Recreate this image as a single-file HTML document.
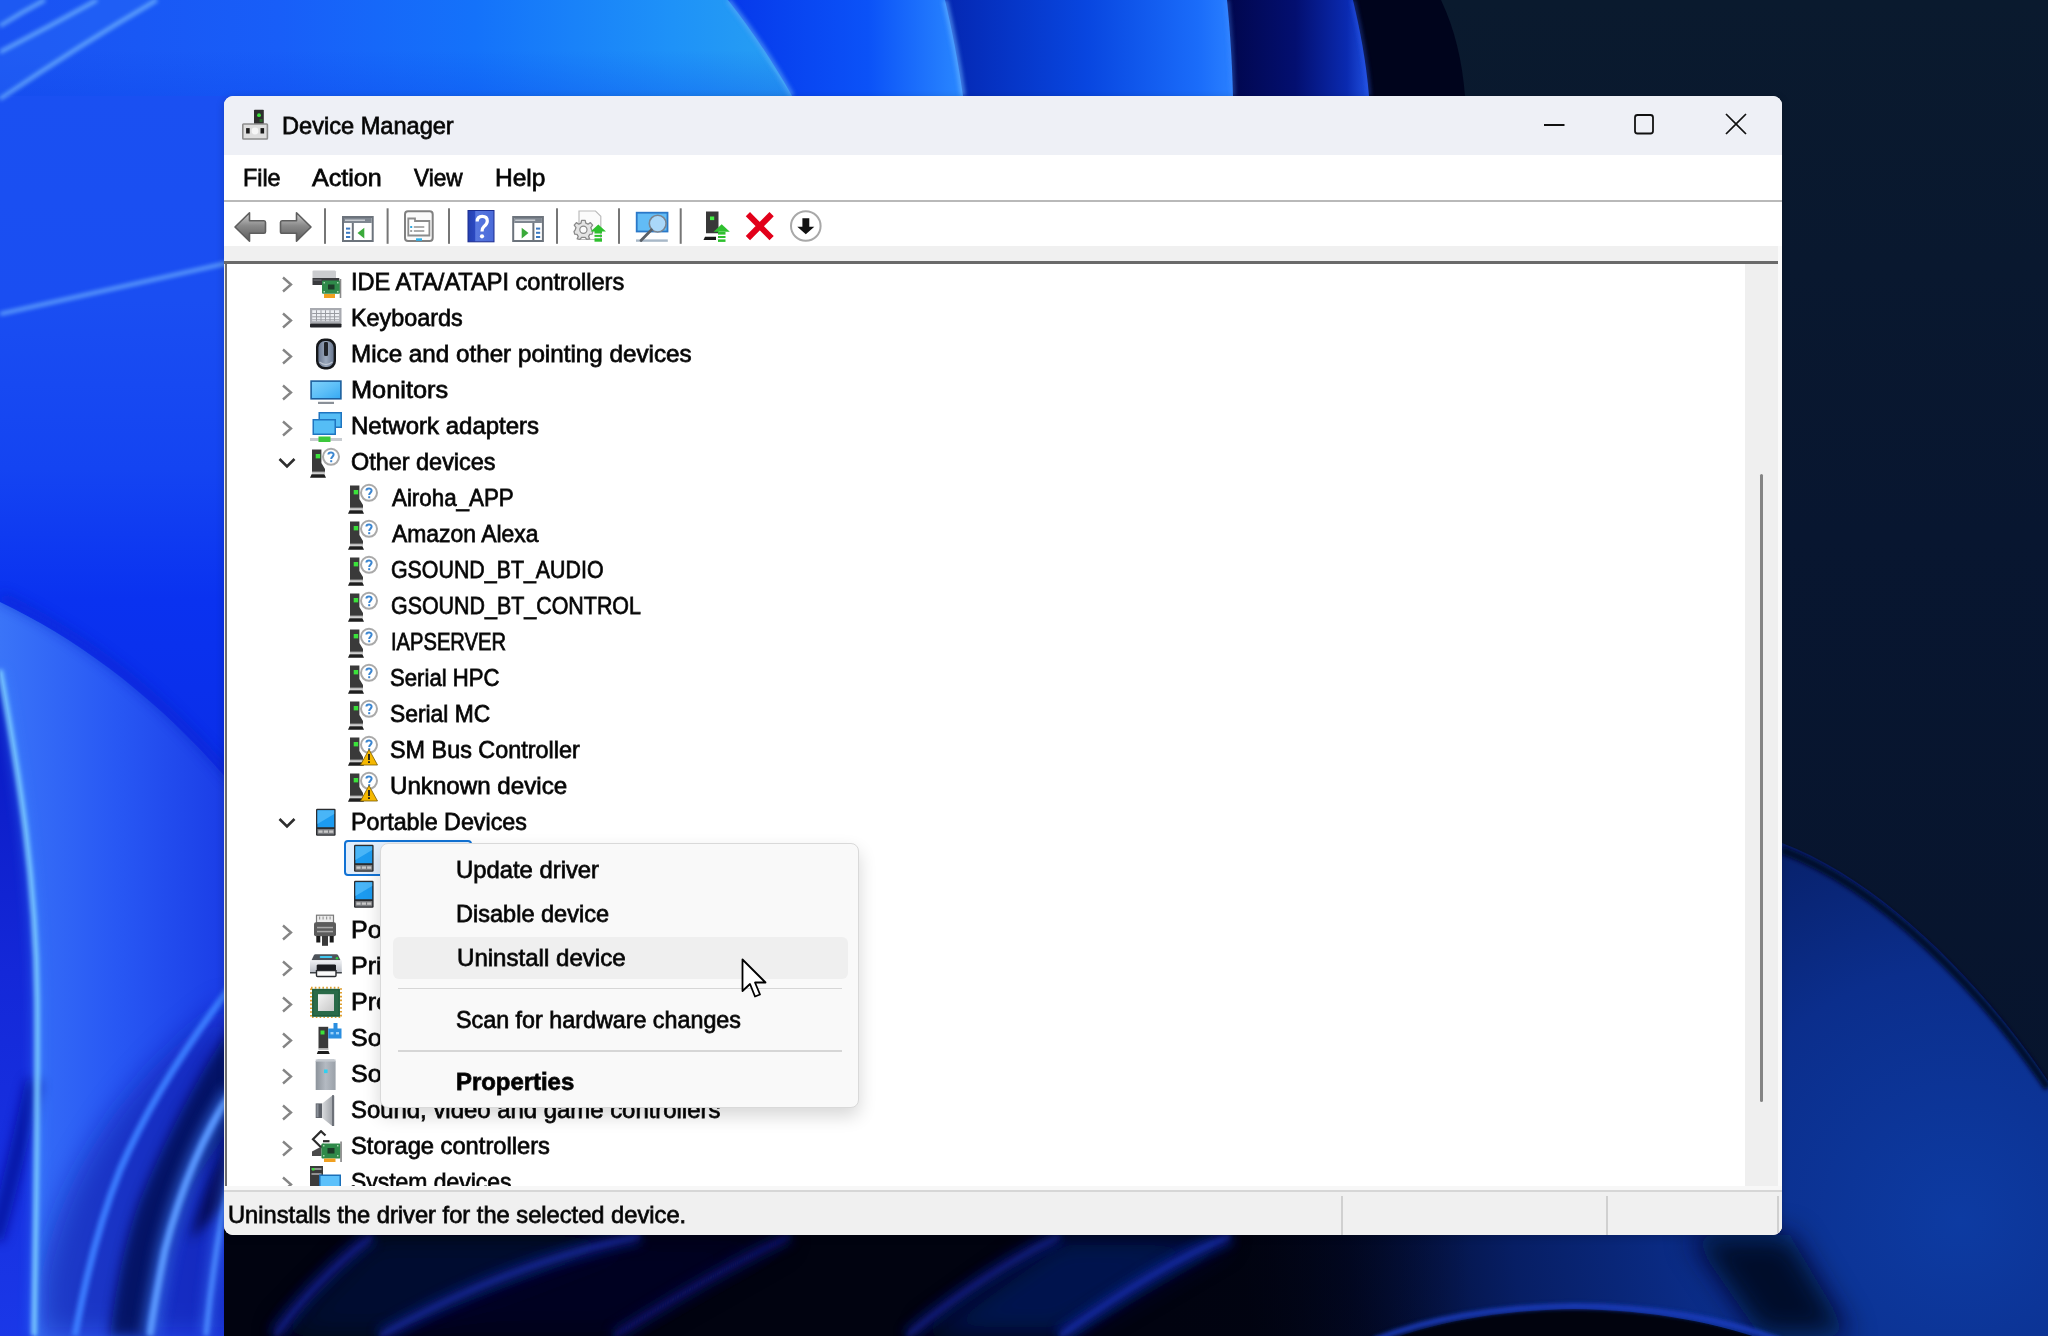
<!DOCTYPE html><html><head><meta charset="utf-8"><title>Device Manager</title><style>

html,body{margin:0;padding:0;width:2048px;height:1336px;overflow:hidden;background:#0a1628}
#bg{position:absolute;left:0;top:0}
.t{position:absolute;white-space:pre;line-height:40px;height:40px;font-family:"Liberation Sans",sans-serif;transform-origin:0 0;color:#000;-webkit-text-stroke:0.8px #141414}
.ic{position:absolute;overflow:visible}
.win{position:absolute;left:224px;top:96px;width:1558px;height:1139px;border-radius:9px;overflow:hidden;background:#f0f0f0;box-shadow:0 2px 8px rgba(0,0,0,.2)}
.abs{position:absolute}
.sel{position:absolute;border:2.4px solid #1172d4;border-radius:4px;background:#e3eefb;box-sizing:border-box}
.menu{position:absolute;left:380px;top:842.5px;width:479px;height:265px;background:#f9f9f9;border:1px solid #d9d9d9;border-radius:8px;box-sizing:border-box;box-shadow:0 8px 18px rgba(0,0,0,.16)}

</style></head><body>

<svg id="bg" width="2048" height="1336" viewBox="0 0 2048 1336">
<defs>
 <linearGradient id="bgA" gradientUnits="userSpaceOnUse" x1="0" y1="0" x2="792" y2="0"><stop offset="0" stop-color="#1a52f2"/><stop offset=".35" stop-color="#185ef8"/><stop offset=".6" stop-color="#1472fa"/><stop offset=".85" stop-color="#1e92f8"/><stop offset="1" stop-color="#28a0f2"/></linearGradient>
 <linearGradient id="bgB" x1="0" y1="0" x2="1" y2="0"><stop offset="0" stop-color="#0638ea"/><stop offset=".6" stop-color="#0b52f8"/><stop offset="1" stop-color="#2a88ff"/></linearGradient>
 <linearGradient id="bgC" x1="0" y1="0" x2="1" y2="0"><stop offset="0" stop-color="#0426b0"/><stop offset=".5" stop-color="#0846e0"/><stop offset=".88" stop-color="#1a6cfa"/><stop offset="1" stop-color="#2a80ff"/></linearGradient>
 <linearGradient id="bgD" x1="0" y1="0" x2="1" y2="0"><stop offset="0" stop-color="#01064a"/><stop offset=".5" stop-color="#030f70"/><stop offset=".85" stop-color="#0a2ab0"/><stop offset="1" stop-color="#2050e0"/></linearGradient>
 <linearGradient id="bgL" x1="0" y1="0" x2="0" y2="1"><stop offset="0" stop-color="#1a50f2"/><stop offset=".165" stop-color="#1a4ef2"/><stop offset=".3" stop-color="#1444f2"/><stop offset=".406" stop-color="#0a32f0"/><stop offset=".55" stop-color="#0a2ee8"/></linearGradient>
 <radialGradient id="bgR" gradientUnits="userSpaceOnUse" cx="1960" cy="1220" r="720"><stop offset="0" stop-color="#0d3ba2"/><stop offset=".35" stop-color="#0b2e8c"/><stop offset=".62" stop-color="#071e64"/><stop offset=".85" stop-color="#020a2a"/><stop offset="1" stop-color="#010412"/></radialGradient>
 <linearGradient id="bgP" x1="0" y1="0" x2="1" y2="0"><stop offset="0" stop-color="#3a74f8"/><stop offset=".5" stop-color="#2858f4"/><stop offset="1" stop-color="#1a3ce6"/></linearGradient>
 <linearGradient id="bgPL" x1="0" y1="0" x2="0" y2="1"><stop offset="0" stop-color="#0818c0"/><stop offset=".45" stop-color="#1428d8"/><stop offset="1" stop-color="#1a38e8"/></linearGradient>
 <linearGradient id="bgBot" gradientUnits="userSpaceOnUse" x1="224" y1="0" x2="1782" y2="0"><stop offset="0" stop-color="#010310"/><stop offset=".6" stop-color="#010310"/><stop offset=".8" stop-color="#010310" stop-opacity="0"/><stop offset="1" stop-color="#010310" stop-opacity="0"/></linearGradient>
 <linearGradient id="bgRS" x1="0" y1="0" x2="0" y2="1"><stop offset="0" stop-color="#0a1a2e"/><stop offset=".4" stop-color="#081630"/><stop offset="1" stop-color="#07142c"/></linearGradient>
 <linearGradient id="bgAdark" x1="0" y1="0" x2="0" y2="1"><stop offset="0" stop-color="#0a40e8" stop-opacity="0"/><stop offset="1" stop-color="#0a40e8" stop-opacity=".35"/></linearGradient>
 <filter id="bl2" x="-50%" y="-50%" width="200%" height="200%"><feGaussianBlur stdDeviation="2"/></filter>
 <filter id="bl6" x="-50%" y="-50%" width="200%" height="200%"><feGaussianBlur stdDeviation="6"/></filter>
 <filter id="bl14" x="-50%" y="-50%" width="200%" height="200%"><feGaussianBlur stdDeviation="14"/></filter>
</defs>
<rect width="2048" height="1336" fill="#081630"/>
<rect x="1440" y="0" width="608" height="1336" fill="url(#bgRS)"/>
<path d="M1100,0 H1441 C1455,30 1462,60 1465,96 L1465,110 H1100 Z" fill="#00041c"/>
<path d="M1222,0 H1353 C1360,30 1366,60 1369,96 V110 H1222 Z" fill="url(#bgD)"/>
<path d="M940,0 H1227 C1230,30 1232,60 1233,96 V110 H940 Z" fill="url(#bgC)"/>
<path d="M725,0 H945 C952,30 958,60 963,96 V110 H725 Z" fill="url(#bgB)"/>
<path d="M0,0 H728 C750,28 772,60 792,96 V110 H0 Z" fill="url(#bgA)"/>
<path d="M0,50 H758 C772,68 783,82 792,96 V110 H0 Z" fill="url(#bgAdark)"/>
<g>
<rect x="0" y="96" width="232" height="1240" fill="url(#bgL)"/>
<g filter="url(#bl2)">
<path d="M728,0 C750,28 772,60 792,96" fill="none" stroke="#58a8f8" stroke-width="5" opacity=".7"/>
<path d="M945,0 C952,30 958,60 963,96" fill="none" stroke="#6ab4ff" stroke-width="5" opacity=".7"/>
<path d="M1227,0 C1230,30 1232,60 1233,96" fill="none" stroke="#4a90ff" stroke-width="4" opacity=".45"/>
<path d="M1353,0 C1360,30 1366,60 1369,96" fill="none" stroke="#3060f0" stroke-width="4" opacity=".45"/>
</g>
<path d="M0,26 Q22,12 45,0 V0 H0 Z" fill="#2060f2" opacity=".5"/>
<path d="M0,99 Q80,45 157,0 H97 Q50,26 0,52 Z" fill="#2a6cf6" opacity=".35"/>
<g fill="none" stroke="#7cc0ff" stroke-width="3.2" opacity=".9" filter="url(#bl2)">
 <path d="M0,26 Q22,12 45,0"/>
 <path d="M0,52 Q50,26 97,0"/>
 <path d="M0,99 Q80,45 157,0"/>
 <path d="M0,314 L232,262"/>
</g>
<!-- petal boundary shadow + petal -->
<path d="M0,602 C80,640 160,700 232,785 V1336 H0 Z" fill="url(#bgP)"/>
<path d="M0,596 C80,634 160,694 232,779" fill="none" stroke="#0a24c8" stroke-width="10" opacity=".55" filter="url(#bl6)"/>
<path d="M40,1280 C60,1180 120,1080 232,1000 V1336 H40 Z" fill="#0816a0" opacity=".55" filter="url(#bl14)"/>
<!-- left of streak -->
<path d="M-10,665 L0,670 C20,780 36,880 37,1000 C38,1120 35,1250 34,1346 H-10 Z" fill="url(#bgPL)"/>
<path d="M-5,1240 C10,1190 22,1130 34,1080" fill="none" stroke="#060c90" stroke-width="16" opacity=".75" filter="url(#bl6)"/>
<path d="M0,670 C20,780 36,880 37,1000 C38,1120 35,1250 34,1336" fill="none" stroke="#3a88ff" stroke-width="10" opacity=".45" filter="url(#bl6)"/>
<path d="M0,670 C20,780 36,880 37,1000 C38,1120 35,1250 34,1336" fill="none" stroke="#78c8ff" stroke-width="5.5" filter="url(#bl2)"/>
<!-- lower right streaks -->
<path d="M232,1025 C195,1080 165,1140 140,1200 C125,1240 115,1290 110,1336 H150 C158,1280 175,1220 195,1180 C208,1160 222,1140 232,1125 Z" fill="#000a50" opacity=".8" filter="url(#bl6)"/>
<path d="M232,1128 C215,1160 200,1200 190,1240 L232,1200 Z" fill="#00062e" opacity=".7" filter="url(#bl6)"/>
<path d="M232,985 C190,1040 150,1100 120,1170 C100,1220 85,1280 75,1336" fill="none" stroke="#3a7cff" stroke-width="7" filter="url(#bl2)"/>
<path d="M232,1092 C205,1130 180,1190 165,1250 C157,1290 152,1320 150,1336" fill="none" stroke="#3a78f8" stroke-width="18" opacity=".6" filter="url(#bl6)"/>
<path d="M232,1092 C205,1130 180,1190 165,1250 C157,1290 152,1320 150,1336" fill="none" stroke="#5a98ff" stroke-width="7" filter="url(#bl2)"/>
<path d="M236,1150 C222,1210 212,1270 206,1336" fill="none" stroke="#3a74f8" stroke-width="12" opacity=".6" filter="url(#bl6)"/>
<path d="M236,1150 C222,1210 212,1270 206,1336" fill="none" stroke="#4a88ff" stroke-width="5" filter="url(#bl2)"/>
</g>
<!-- right petal -->
<path d="M1782,843 C1880,880 1980,980 2048,1081 V1336 H1100 V1230 H1782 Z" fill="url(#bgR)"/>
<path d="M1782,850 C1880,887 1980,987 2048,1088" fill="none" stroke="#02082a" stroke-width="8" filter="url(#bl2)"/>
<!-- bottom strip -->
<rect x="224" y="1225" width="1558" height="111" fill="url(#bgBot)"/>
<g filter="url(#bl14)">
 <path d="M372,1236 L640,1236 L380,1336 L275,1336 Z" fill="#06104a" opacity=".55"/>
 <path d="M640,1236 L790,1236 L614,1336 L380,1336 Z" fill="#030a30" opacity=".5"/>
 <path d="M1060,1236 L1230,1236 L1060,1336 L920,1336 Z" fill="#08186a" opacity=".7"/>
 <path d="M1690,1235 L1790,1235 L1850,1336 L1760,1336 Z" fill="#02082a"/>
</g>
<g fill="none" filter="url(#bl6)" opacity=".8">
 <path d="M275,1336 C300,1300 335,1265 372,1236" stroke="#0c1c80" stroke-width="14"/>
 <path d="M380,1336 C460,1290 550,1255 640,1236" stroke="#10208a" stroke-width="14"/>
 <path d="M614,1336 C670,1300 730,1265 790,1236" stroke="#0a1668" stroke-width="12"/>
 <path d="M907,1336 C950,1300 1000,1265 1060,1236" stroke="#0c1c80" stroke-width="12"/>
 <path d="M1060,1336 C1110,1300 1170,1260 1230,1236" stroke="#1028a0" stroke-width="14"/>
</g>
<g fill="none" filter="url(#bl2)" opacity=".55">
 <path d="M275,1336 C300,1300 335,1265 372,1236" stroke="#1a2aa0" stroke-width="3"/>
 <path d="M380,1336 C460,1290 550,1255 640,1236" stroke="#2030b0" stroke-width="3.5"/>
 <path d="M614,1336 C670,1300 730,1265 790,1236" stroke="#101e80" stroke-width="3"/>
 <path d="M907,1336 C950,1300 1000,1265 1060,1236" stroke="#1a2aa0" stroke-width="3"/>
 <path d="M1060,1336 C1110,1300 1170,1260 1230,1236" stroke="#2038c0" stroke-width="3.5"/>
</g>
<path d="M1374,1346 C1430,1322 1500,1310 1574,1309 C1650,1310 1720,1322 1780,1346 Z" fill="#01030e"/>
<path d="M1374,1340 C1430,1318 1500,1307 1574,1306 C1650,1307 1720,1318 1780,1340" fill="none" stroke="#1a3cc0" stroke-width="5" filter="url(#bl2)"/>
</svg>

<svg width="0" height="0" style="position:absolute"><defs>
<symbol id="i-tower" viewBox="0 0 32 32">
  <path d="M2,3.5 H11.4 V17 L15,23 V25.7 H2 Z" fill="#3a3a3a"/>
  <rect x="2" y="26" width="13" height="1.7" fill="#bdbdbd"/>
  <path d="M1.6,28.3 H14.4 L16,31.8 H0 Z" fill="#1e1e1e"/>
  <rect x="5.7" y="8" width="4.5" height="4.4" fill="#3be23b"/>
</symbol>
<symbol id="i-q" viewBox="0 0 32 32">
  <circle cx="21" cy="10.8" r="8" fill="#fff" stroke="#a9a9a9" stroke-width="2"/>
  <path d="M18.4,8.6 C18.4,5.9 23.6,5.7 23.6,8.6 C23.6,10.6 21.2,10.8 21.2,13" fill="none" stroke="#3c86d0" stroke-width="2"/>
  <rect x="20.2" y="14.2" width="2" height="2" fill="#3c86d0"/>
</symbol>
<symbol id="i-warn" viewBox="0 0 32 32">
  <path d="M21,15.5 L29.5,31 H12.5 Z" fill="#f5b800" stroke="#7a5a00" stroke-width="0.8" stroke-linejoin="round"/>
  <rect x="20.1" y="20" width="1.8" height="6" fill="#1a1a1a"/>
  <rect x="20.1" y="27.2" width="1.8" height="1.8" fill="#1a1a1a"/>
</symbol>
<symbol id="i-other" viewBox="0 0 32 32"><use href="#i-tower"/><use href="#i-q"/></symbol>
<symbol id="i-otherw" viewBox="0 0 32 32"><use href="#i-tower"/><use href="#i-q"/><use href="#i-warn"/></symbol>
<symbol id="i-ide" viewBox="0 0 32 32">
  <path d="M2.5,5.5 Q2.5,4.4 3.6,4.4 H25 L26,5.5 V12 H2.5 Z" fill="#cbcccf"/>
  <rect x="2.5" y="12" width="26.8" height="7" fill="#3a3b3e"/>
  <rect x="3.5" y="13.5" width="8" height="1.2" fill="#6a6b70"/>
  <rect x="12" y="14.5" width="18" height="13.2" rx="1" fill="#2f8a4a"/>
  <g fill="#a8d8b0"><rect x="13.5" y="16" width="1.5" height="1.5"/><rect x="27" y="16" width="1.5" height="1.5"/><rect x="13.5" y="25" width="1.5" height="1.5"/><rect x="27" y="25" width="1.5" height="1.5"/></g>
  <rect x="18" y="18.5" width="6.5" height="5" fill="#1c3a28"/>
  <rect x="14" y="28" width="11" height="4" fill="#f0a020"/>
  <rect x="29.7" y="13" width="1.6" height="19" fill="#8a8a8a"/>
</symbol>
<symbol id="i-kbd" viewBox="0 0 32 32">
  <rect x="0" y="6" width="31.5" height="15.5" fill="#a8aab0"/>
  <rect x="2.2" y="8.2" width="27" height="11" fill="#eef0f4"/>
  <g fill="#9a9ca2"><rect x="2.2" y="11" width="27" height="1"/><rect x="2.2" y="14.3" width="27" height="1"/><rect x="2.2" y="17.3" width="27" height="1"/>
  <rect x="6" y="8.2" width="1" height="11"/><rect x="10.5" y="8.2" width="1" height="11"/><rect x="15" y="8.2" width="1" height="11"/><rect x="19.5" y="8.2" width="1" height="11"/><rect x="24" y="8.2" width="1" height="11"/></g>
  <rect x="0" y="21.5" width="31.5" height="4" rx="0.8" fill="#232428"/>
</symbol>
<symbol id="i-mouse" viewBox="0 0 32 32">
  <defs><linearGradient id="gms" x1="0" y1="0" x2="1" y2="0"><stop offset="0" stop-color="#6a7890"/><stop offset=".5" stop-color="#9aa8bc"/><stop offset="1" stop-color="#6a7890"/></linearGradient></defs>
  <rect x="6" y="0.6" width="20" height="30.8" rx="8.5" fill="#15171a"/>
  <rect x="8.4" y="3" width="15.2" height="26" rx="6.5" fill="url(#gms)"/>
  <path d="M9.5,24 Q16,29 22.5,24" fill="none" stroke="#d8dde6" stroke-width="1.2" opacity=".7"/>
  <rect x="14" y="4" width="4" height="14" rx="1.2" fill="#202328"/>
</symbol>
<symbol id="i-mon" viewBox="0 0 32 32">
  <defs><linearGradient id="gmon" x1="0" y1="0" x2="1" y2="1"><stop offset="0" stop-color="#7ed0fa"/><stop offset=".5" stop-color="#5ec0f8"/><stop offset="1" stop-color="#38aaf2"/></linearGradient></defs>
  <rect x="0.3" y="6.3" width="31.4" height="19.3" fill="#1c5e9c"/>
  <rect x="1.9" y="7.9" width="28.2" height="16.1" fill="url(#gmon)"/>
  <rect x="8" y="27.8" width="16" height="2.2" fill="#8a9098"/>
</symbol>
<symbol id="i-net" viewBox="0 0 32 32">
  <rect x="8.5" y="2" width="23.5" height="16" fill="#1f75c0"/>
  <rect x="10" y="3.5" width="20.5" height="13" fill="#55bdf5"/>
  <rect x="2.5" y="9" width="23.5" height="16" fill="#1f75c0"/>
  <rect x="4" y="10.5" width="20.5" height="13" fill="#55bdf5"/>
  <rect x="0" y="28" width="32" height="3" fill="#c8ccd0"/>
  <rect x="8.5" y="26.5" width="12" height="5.5" fill="#3cc83c"/>
</symbol>
<symbol id="i-pda" viewBox="0 0 32 32">
  <rect x="6" y="2.8" width="19.6" height="27" rx="1.2" fill="#2b2d30"/>
  <rect x="7.4" y="4.2" width="16.8" height="17" fill="#1c9bf0"/>
  <path d="M7.4,4.2 H24.2 V8 L7.4,18 Z" fill="#5cc0fa" opacity=".7"/>
  <rect x="7.4" y="23" width="16.8" height="5.5" fill="#7a7c80"/>
  <g fill="#c8c8c8"><rect x="8.4" y="24.4" width="4.2" height="2.4"/><rect x="13.8" y="24.4" width="4.2" height="2.4"/><rect x="19.1" y="24.4" width="4.2" height="2.4"/></g>
</symbol>
<symbol id="i-ports" viewBox="0 0 32 32">
  <rect x="6.5" y="1.2" width="17" height="7.5" fill="#ececec" stroke="#7a7a7a" stroke-width="1.2"/>
  <g fill="#9a9a9a"><rect x="9" y="2.5" width="1.2" height="3"/><rect x="12.5" y="2.5" width="1.2" height="3"/><rect x="16" y="2.5" width="1.2" height="3"/><rect x="19.5" y="2.5" width="1.2" height="3"/></g>
  <rect x="4" y="8.3" width="22" height="14" rx="2" fill="#5c5c5c"/>
  <rect x="7" y="12.8" width="16" height="1.5" fill="#a8a8a8"/><rect x="7" y="16.8" width="16" height="1.5" fill="#a8a8a8"/>
  <rect x="6.3" y="22" width="4" height="6.5" fill="#1a1a1a"/><rect x="19.7" y="22" width="4" height="6.5" fill="#1a1a1a"/>
  <rect x="12" y="22" width="6" height="9.8" fill="#3a3a3a"/>
</symbol>
<symbol id="i-printer" viewBox="0 0 32 32">
  <defs><linearGradient id="gpr" x1="0" y1="0" x2="0" y2="1"><stop offset="0" stop-color="#f0f2f5"/><stop offset="1" stop-color="#b8bcc4"/></linearGradient></defs>
  <path d="M1.5,10.3 L4,5 Q4.5,4.3 5.5,4.3 H26.5 Q27.5,4.3 28,5 L30.5,10.3 Z" fill="#4e535a"/>
  <rect x="9.7" y="6" width="12.6" height="2" rx="1" fill="#40c8f0"/>
  <circle cx="27" cy="8.2" r="1.3" fill="#30d040"/>
  <rect x="0" y="10.3" width="31.8" height="12.7" fill="url(#gpr)"/>
  <rect x="0" y="22" width="31.8" height="1.5" fill="#404448"/>
  <path d="M6.7,15.3 Q7,14.5 8,14.5 H24.5 Q25.7,14.5 26,15.3 V21 H6.7 Z" fill="#1a1c20"/>
  <path d="M6.5,20.6 H26 V25.5 Q26,26.5 25,26.5 H7.5 Q6.5,26.5 6.5,25.5 Z" fill="#fafafa" stroke="#2a2c30" stroke-width="1.4"/>
</symbol>
<symbol id="i-cpu" viewBox="0 0 32 32">
  <defs><linearGradient id="gcpu" x1="0" y1="0" x2="1" y2="1"><stop offset="0" stop-color="#f4f4f4"/><stop offset="1" stop-color="#c8c8c8"/></linearGradient></defs>
  <rect x="1" y="1.8" width="30" height="30" fill="none" stroke="#e0a030" stroke-width="2" stroke-dasharray="1.6 2.2"/>
  <rect x="2" y="2.8" width="28" height="28" fill="#2a6a48"/>
  <rect x="3" y="3.8" width="26" height="26" fill="none" stroke="#1e5a3a" stroke-width="1"/>
  <rect x="8" y="8.2" width="16" height="16.8" fill="url(#gcpu)"/>
</symbol>
<symbol id="i-swcomp" viewBox="0 0 32 32">
  <path d="M8.5,4.8 H18.2 V26.5 H8.5 Z" fill="#3a3a3a"/>
  <rect x="8.5" y="26.5" width="10" height="1.6" fill="#bdbdbd"/>
  <path d="M8,29 H18.5 L19.7,32 H6.8 Z" fill="#1e1e1e"/>
  <rect x="10.5" y="8.5" width="4" height="4" fill="#3be23b"/>
  <path d="M18.2,6.5 H23.5 V1 H27.5 V6.5 H31.5 V16.4 H18.2 Z" fill="#2a8ee0"/>
  <rect x="20.5" y="10" width="3" height="2.4" fill="#9ad0f8"/><rect x="26" y="10" width="3" height="2.4" fill="#9ad0f8"/>
</symbol>
<symbol id="i-swdev" viewBox="0 0 32 32">
  <path d="M5.7,3.5 L7.7,1.4 H24 L25.6,3.5 V32.3 H5.7 Z" fill="url(#gsw)"/>
  <rect x="5.7" y="1.4" width="19.9" height="2.2" fill="#c4c9cf"/>
  <rect x="14" y="11.5" width="3.6" height="3.6" fill="#30d0f0"/>
</symbol>
<symbol id="i-sound" viewBox="0 0 32 32">
  <rect x="5.7" y="9.4" width="6.5" height="14.6" fill="#5c6068"/>
  <rect x="6.5" y="10.2" width="2" height="13" fill="#8a9098"/>
  <path d="M12.2,9.4 L23,1 V32.5 L12.2,24 Z" fill="url(#gspk)"/>
  <rect x="22" y="1" width="2.2" height="31.5" rx="1" fill="#6c7078"/>
</symbol>
<symbol id="i-storage" viewBox="0 0 32 32">
  <path d="M15.5,5.5 L11,1.2 L3,9.2 L11,17.2 L14,14.2" fill="none" stroke="#2c2c2c" stroke-width="2.2"/>
  <path d="M13,11.2 H19.5" stroke="#2c2c2c" stroke-width="2.2"/>
  <path d="M2,21.5 L11.5,16.5 V26 H2 Z" fill="#4a4a4a"/>
  <rect x="11.5" y="13.5" width="19" height="15" rx="1" fill="#2f8a4a"/>
  <g fill="#a8d8b0"><rect x="13" y="15" width="1.5" height="1.5"/><rect x="27" y="15" width="1.5" height="1.5"/><rect x="13" y="25" width="1.5" height="1.5"/><rect x="27" y="25" width="1.5" height="1.5"/></g>
  <rect x="17.5" y="18" width="7" height="5.5" fill="#1c3a28"/>
  <rect x="14" y="28.5" width="11.5" height="3.5" fill="#f0a020"/>
  <rect x="30.2" y="11.5" width="1.7" height="20.5" fill="#8a8a8a"/>
</symbol>
<symbol id="i-system" viewBox="0 0 32 32">
  <rect x="0" y="0" width="13" height="20" fill="#3a3a3a"/>
  <rect x="1.5" y="2" width="10" height="2" fill="#909090"/>
  <rect x="2" y="2" width="2.5" height="2.5" fill="#3be23b"/>
  <rect x="1.5" y="7" width="10" height="2" fill="#909090"/>
  <rect x="9" y="8.5" width="22" height="11.5" fill="#1a6fb8"/>
  <rect x="10.5" y="10" width="19" height="10" fill="#5cc0fa"/>
</symbol>
<linearGradient id="gsw" x1="0" y1="0" x2="1" y2="0"><stop offset="0" stop-color="#8c939b"/><stop offset=".5" stop-color="#b4bac2"/><stop offset="1" stop-color="#9aa1a9"/></linearGradient>
<linearGradient id="gspk" x1="0" y1="0" x2="1" y2="0"><stop offset="0" stop-color="#d8dadd"/><stop offset="1" stop-color="#9ea2a8"/></linearGradient>
<linearGradient id="gback" x1="0" y1="0" x2="0" y2="1"><stop offset="0" stop-color="#c8c8c8"/><stop offset=".5" stop-color="#707070"/><stop offset="1" stop-color="#a0a0a0"/></linearGradient>
</defs></svg>
<div class="win">
<div class="abs" style="left:0;top:0;width:1558px;height:59px;background:#eef0f6"></div>
<svg class="ic" style="left:18px;top:12px" width="28" height="32" viewBox="0 0 28 32">
 <rect x="12" y="1.8" width="9.8" height="14.5" rx="0.8" fill="#2e2e2e"/><circle cx="17" cy="7.2" r="1.9" fill="#3be23b"/>
 <rect x="17.5" y="11" width="3" height="3" fill="#2a8a2a" opacity=".6"/>
 <rect x="0.8" y="16" width="24.6" height="15" rx="0.8" fill="#dedede" stroke="#8c8c8c" stroke-width="1.6"/>
 <rect x="4.1" y="20.1" width="3.6" height="5.4" fill="#1a1a1a"/><rect x="18.5" y="20.1" width="3.6" height="5.4" fill="#1a1a1a"/>
 <circle cx="13" cy="23" r="3.4" fill="#f6f6f6"/>
</svg>
<div class="t" style="left:58.03px;top:10.11px;font-size:24.5px;font-weight:normal;color:#000;transform:scaleX(0.9626);">Device Manager</div>
<svg class="ic" style="left:1310px;top:10px" width="240" height="40" viewBox="0 0 240 40">
 <rect x="10" y="18" width="20.5" height="2" fill="#111"/>
 <rect x="101" y="9" width="18" height="18.5" rx="2.5" fill="none" stroke="#111" stroke-width="1.8"/>
 <path d="M192,8 L212,28 M212,8 L192,28" stroke="#111" stroke-width="1.7"/>
</svg>
<div class="abs" style="left:0;top:59px;width:1558px;height:45px;background:#fff"></div>
<div class="t" style="left:19.06px;top:62.11px;font-size:24.5px;font-weight:normal;color:#000;transform:scaleX(0.9524);">File</div>
<div class="t" style="left:87.91px;top:62.11px;font-size:24.5px;font-weight:normal;color:#000;transform:scaleX(1.0248);">Action</div>
<div class="t" style="left:190.12px;top:62.11px;font-size:24.5px;font-weight:normal;color:#000;transform:scaleX(0.9231);">View</div>
<div class="t" style="left:270.96px;top:62.11px;font-size:24.5px;font-weight:normal;color:#000;transform:scaleX(1.0004);">Help</div>
<div class="abs" style="left:0;top:104px;width:1558px;height:2px;background:#b9b9b9"></div>
<div class="abs" style="left:0;top:106px;width:1558px;height:44px;background:#fff"></div>

<svg class="ic" style="left:10px;top:114px" width="600" height="40" viewBox="0 0 600 40">
 <defs>
  <linearGradient id="gArr" x1="0" y1="0" x2="0" y2="1"><stop offset="0" stop-color="#d0d0d0"/><stop offset=".45" stop-color="#8a8a8a"/><stop offset="1" stop-color="#5a5a5a"/></linearGradient>
  <linearGradient id="gHelp" x1="0" y1="0" x2="1" y2="0"><stop offset="0" stop-color="#2440b0"/><stop offset=".25" stop-color="#2a48c0"/><stop offset=".3" stop-color="#5878e0"/><stop offset="1" stop-color="#4a6ad8"/></linearGradient>
 </defs>
 <path d="M1,17 L15.5,2.8 V10.8 H30 Q31.5,10.8 31.5,12.5 V21.5 Q31.5,23.3 30,23.3 H15.5 V31.3 Z" fill="url(#gArr)" stroke="#5e5e5e" stroke-width="1.6" stroke-linejoin="round"/>
 <path d="M77,17 L62.5,2.8 V10.8 H48 Q46.5,10.8 46.5,12.5 V21.5 Q46.5,23.3 48,23.3 H62.5 V31.3 Z" fill="url(#gArr)" stroke="#5e5e5e" stroke-width="1.6" stroke-linejoin="round"/>
 <rect x="90" y="-1.7" width="2" height="35.5" fill="#767676"/>
 <rect x="109" y="7" width="29.7" height="24" fill="#fff" stroke="#6c737c" stroke-width="2"/>
 <rect x="110" y="8" width="27.7" height="5" fill="#7e8690"/>
 <rect x="111" y="9.5" width="20" height="1.5" fill="#c8ccd2"/>
 <rect x="117.8" y="13" width="2" height="18" fill="#6c737c"/>
 <rect x="112" y="17.6" width="4.2" height="2" fill="#3a78c0"/><rect x="112" y="21.8" width="4.2" height="2" fill="#3a78c0"/><rect x="112" y="26" width="4.2" height="2" fill="#3a78c0"/>
 <path d="M123.5,23 L130.3,17.8 V28.4 Z" fill="#3aaa3a"/>
 <rect x="152.6" y="-1.7" width="2" height="35.5" fill="#767676"/>
 <rect x="171" y="1.3" width="27.7" height="29.6" rx="3" fill="#fafafa" stroke="#808080" stroke-width="2"/>
 <path d="M174.3,8.5 H181 V11 H195.4 V25.5 H174.3 Z" fill="#fff" stroke="#8c8c8c" stroke-width="1.8"/>
 <rect x="176.2" y="16" width="2" height="2" fill="#30a8e0"/><rect x="179.8" y="16.2" width="10.5" height="1.6" fill="#9a9a9a"/>
 <rect x="176.2" y="20" width="2" height="2" fill="#a0a0a0"/><rect x="179.8" y="20.2" width="10.5" height="1.6" fill="#9a9a9a"/>
 <rect x="182" y="28.3" width="6" height="2.5" fill="#30b0e8"/>
 <rect x="214" y="-1.7" width="2" height="35.5" fill="#767676"/>
 <rect x="234" y="0.5" width="26" height="31.3" fill="url(#gHelp)" stroke="#1a2c90" stroke-width="1"/>
 <path d="M243.2,11.5 Q243.2,6.3 248.2,6.3 Q253.3,6.3 253.3,11 Q253.3,14 250,16.5 Q248,18.3 248,21.5" fill="none" stroke="#fff" stroke-width="3.2"/>
 <circle cx="248" cy="26.3" r="2.1" fill="#fff"/>
 <rect x="279.2" y="7" width="29.7" height="24" fill="#fff" stroke="#6c737c" stroke-width="2"/>
 <rect x="280.2" y="8" width="27.7" height="5" fill="#7e8690"/>
 <rect x="281.2" y="9.5" width="20" height="1.5" fill="#c8ccd2"/>
 <rect x="298.4" y="13" width="2" height="18" fill="#6c737c"/>
 <rect x="302" y="17.6" width="4.2" height="2" fill="#3a78c0"/><rect x="302" y="21.8" width="4.2" height="2" fill="#3a78c0"/><rect x="302" y="26" width="4.2" height="2" fill="#3a78c0"/>
 <path d="M294.5,23 L287.7,17.8 V28.4 Z" fill="#3aaa3a"/>
 <rect x="322" y="-1.7" width="2" height="35.5" fill="#767676"/>
 <path d="M345,1 H361.5 L366.8,6.3 V29.5 H345 Z" fill="#fbfbfb" stroke="#bcbcbc" stroke-width="1.2"/>
 <g transform="translate(349.4,19.8)">
  <path d="M-1.8,-9.4 H1.8 L2.4,-6.6 L4.6,-5.6 L7,-7.2 L9.2,-4.6 L7.4,-2.2 L8.2,0 L9.4,1.8 L8.6,4.4 L6.4,4.6 L5.2,6.6 L6.2,9 L3.4,9.6 L1.8,7.6 H-1.8 L-3.4,9.6 L-6.2,9 L-5.2,6.6 L-6.4,4.6 L-8.6,4.4 L-9.4,1.8 L-8.2,0 L-7.4,-2.2 L-9.2,-4.6 L-7,-7.2 L-4.6,-5.6 L-2.4,-6.6 Z" fill="#e4e4e4" stroke="#8a8a8a" stroke-width="1.3" stroke-linejoin="round"/>
  <circle r="3.6" fill="#fbfbfb" stroke="#8a8a8a" stroke-width="1.2"/>
 </g>
 <path d="M356.6,21.6 L364.3,14.6 L372,21.6 H368 V23.5 H360.5 V21.6 Z" fill="#2ec02e"/>
 <rect x="360.5" y="24.9" width="7.5" height="2" fill="#2ec02e"/><rect x="360.5" y="28.3" width="7.5" height="3.4" fill="#2ec02e"/>
 <rect x="384" y="-1.7" width="2" height="35.5" fill="#767676"/>
 <rect x="402.7" y="2.7" width="30.8" height="18.8" fill="#62bcf6" stroke="#2a78c8" stroke-width="1.8"/>
 <rect x="402" y="29.4" width="31.8" height="2.4" fill="#a8b8c8"/>
 <circle cx="423.7" cy="13.6" r="8.4" fill="#aad8fa" stroke="#7a8490" stroke-width="1.6"/>
 <path d="M417.5,19.8 L407,30.5" stroke="#5a6068" stroke-width="2.8" stroke-linecap="round"/>
 <rect x="445.7" y="-1.7" width="2" height="35.5" fill="#767676"/>
 <path d="M472,1.4 H484.5 V23.3 H472 Z" fill="#383838"/>
 <rect x="476" y="6.5" width="4.2" height="3.6" fill="#44ee44"/>
 <path d="M471,26.8 H482 V30 H469.5 Z" fill="#1a1a1a"/>
 <path d="M479.6,21.8 L487.7,14.3 L495.8,21.8 Z" fill="#2ec02e"/>
 <rect x="484" y="22" width="7.5" height="2.6" fill="#2ec02e"/>
 <rect x="484" y="26" width="7.5" height="2" fill="#2ec02e"/><rect x="484" y="29.4" width="7.5" height="2.5" fill="#2ec02e"/>
 <path d="M516,6.3 L535.5,26 M535.5,6.3 L516,26" stroke="#e2001a" stroke-width="6" stroke-linecap="square"/>
 <circle cx="571.8" cy="16" r="14.8" fill="#fff" stroke="#a8a8a8" stroke-width="2"/>
 <path d="M568.4,8.3 H575.3 V16.8 H580.3 L571.8,24.2 L563.3,16.8 H568.4 Z" fill="#111"/>
</svg>

<div class="abs" style="left:0;top:150px;width:1558px;height:15px;background:#f0f0f0"></div>
<div class="abs" style="left:0;top:165px;width:1554px;height:3px;background:#6a6a6a"></div>
<div class="abs" style="left:1px;top:168px;width:2px;height:922px;background:#6d6d6d"></div>
<div class="abs" style="left:3px;top:168px;width:1518px;height:922px;background:#fff;overflow:hidden">
<div class="abs" style="left:-3px;top:-168px;width:1558px;height:1139px">
<svg class="ic" style="left:56px;top:178.5px" width="16" height="20"><path d="M3,2.5 L11,9.5 L3,16.5" fill="none" stroke="#858585" stroke-width="2.4"/></svg>
<svg class="ic" style="left:86px;top:170px" width="32" height="32"><use href="#i-ide"/></svg>
<div class="t" style="left:127.04px;top:166.11px;font-size:24.5px;font-weight:normal;color:#000;transform:scaleX(0.9618);">IDE ATA/ATAPI controllers</div>
<svg class="ic" style="left:56px;top:214.5px" width="16" height="20"><path d="M3,2.5 L11,9.5 L3,16.5" fill="none" stroke="#858585" stroke-width="2.4"/></svg>
<svg class="ic" style="left:86px;top:206px" width="32" height="32"><use href="#i-kbd"/></svg>
<div class="t" style="left:127.05px;top:202.11px;font-size:24.5px;font-weight:normal;color:#000;transform:scaleX(0.9534);">Keyboards</div>
<svg class="ic" style="left:56px;top:250.5px" width="16" height="20"><path d="M3,2.5 L11,9.5 L3,16.5" fill="none" stroke="#858585" stroke-width="2.4"/></svg>
<svg class="ic" style="left:86px;top:242px" width="32" height="32"><use href="#i-mouse"/></svg>
<div class="t" style="left:126.98px;top:238.11px;font-size:24.5px;font-weight:normal;color:#000;transform:scaleX(0.9884);">Mice and other pointing devices</div>
<svg class="ic" style="left:56px;top:286.5px" width="16" height="20"><path d="M3,2.5 L11,9.5 L3,16.5" fill="none" stroke="#858585" stroke-width="2.4"/></svg>
<svg class="ic" style="left:86px;top:278px" width="32" height="32"><use href="#i-mon"/></svg>
<div class="t" style="left:126.89px;top:274.11px;font-size:24.5px;font-weight:normal;color:#000;transform:scaleX(1.0346);">Monitors</div>
<svg class="ic" style="left:56px;top:322.5px" width="16" height="20"><path d="M3,2.5 L11,9.5 L3,16.5" fill="none" stroke="#858585" stroke-width="2.4"/></svg>
<svg class="ic" style="left:86px;top:314px" width="32" height="32"><use href="#i-net"/></svg>
<div class="t" style="left:127.00px;top:310.11px;font-size:24.5px;font-weight:normal;color:#000;transform:scaleX(0.9796);">Network adapters</div>
<svg class="ic" style="left:53px;top:360px" width="20" height="14"><path d="M2.5,3 L10,10.5 L17.5,3" fill="none" stroke="#2e2e2e" stroke-width="2.6"/></svg>
<svg class="ic" style="left:86px;top:350px" width="32" height="32"><use href="#i-other"/></svg>
<div class="t" style="left:127.05px;top:346.11px;font-size:24.5px;font-weight:normal;color:#000;transform:scaleX(0.9561);">Other devices</div>
<svg class="ic" style="left:124px;top:386px" width="32" height="32"><use href="#i-other"/></svg>
<div class="t" style="left:167.64px;top:382.11px;font-size:24.5px;font-weight:normal;color:#000;transform:scaleX(0.9118);">Airoha_APP</div>
<svg class="ic" style="left:124px;top:422px" width="32" height="32"><use href="#i-other"/></svg>
<div class="t" style="left:167.59px;top:418.11px;font-size:24.5px;font-weight:normal;color:#000;transform:scaleX(0.9351);">Amazon Alexa</div>
<svg class="ic" style="left:124px;top:458px" width="32" height="32"><use href="#i-other"/></svg>
<div class="t" style="left:166.52px;top:454.11px;font-size:24.5px;font-weight:normal;color:#000;transform:scaleX(0.8721);">GSOUND_BT_AUDIO</div>
<svg class="ic" style="left:124px;top:494px" width="32" height="32"><use href="#i-other"/></svg>
<div class="t" style="left:166.52px;top:490.11px;font-size:24.5px;font-weight:normal;color:#000;transform:scaleX(0.8743);">GSOUND_BT_CONTROL</div>
<svg class="ic" style="left:124px;top:530px" width="32" height="32"><use href="#i-other"/></svg>
<div class="t" style="left:166.62px;top:526.11px;font-size:24.5px;font-weight:normal;color:#000;transform:scaleX(0.8224);">IAPSERVER</div>
<svg class="ic" style="left:124px;top:566px" width="32" height="32"><use href="#i-other"/></svg>
<div class="t" style="left:166.45px;top:562.11px;font-size:24.5px;font-weight:normal;color:#000;transform:scaleX(0.9042);">Serial HPC</div>
<svg class="ic" style="left:124px;top:602px" width="32" height="32"><use href="#i-other"/></svg>
<div class="t" style="left:166.40px;top:598.11px;font-size:24.5px;font-weight:normal;color:#000;transform:scaleX(0.9320);">Serial MC</div>
<svg class="ic" style="left:124px;top:638px" width="32" height="32"><use href="#i-otherw"/></svg>
<div class="t" style="left:166.35px;top:634.11px;font-size:24.5px;font-weight:normal;color:#000;transform:scaleX(0.9543);">SM Bus Controller</div>
<svg class="ic" style="left:124px;top:674px" width="32" height="32"><use href="#i-otherw"/></svg>
<div class="t" style="left:166.29px;top:670.11px;font-size:24.5px;font-weight:normal;color:#000;transform:scaleX(0.9853);">Unknown device</div>
<svg class="ic" style="left:53px;top:720px" width="20" height="14"><path d="M2.5,3 L10,10.5 L17.5,3" fill="none" stroke="#2e2e2e" stroke-width="2.6"/></svg>
<svg class="ic" style="left:86px;top:710px" width="32" height="32"><use href="#i-pda"/></svg>
<div class="t" style="left:127.06px;top:706.11px;font-size:24.5px;font-weight:normal;color:#000;transform:scaleX(0.9495);">Portable Devices</div>
<div class="sel" style="left:120px;top:744px;width:128px;height:36px"></div>
<svg class="ic" style="left:124px;top:746px" width="32" height="32"><use href="#i-pda"/></svg>
<svg class="ic" style="left:124px;top:782px" width="32" height="32"><use href="#i-pda"/></svg>
<svg class="ic" style="left:56px;top:826.5px" width="16" height="20"><path d="M3,2.5 L11,9.5 L3,16.5" fill="none" stroke="#858585" stroke-width="2.4"/></svg>
<svg class="ic" style="left:86px;top:818px" width="32" height="32"><use href="#i-ports"/></svg>
<div class="t" style="left:126.92px;top:814.11px;font-size:24.5px;font-weight:normal;color:#000;transform:scaleX(1.0204);">Ports (COM &amp; LPT)</div>
<svg class="ic" style="left:56px;top:862.5px" width="16" height="20"><path d="M3,2.5 L11,9.5 L3,16.5" fill="none" stroke="#858585" stroke-width="2.4"/></svg>
<svg class="ic" style="left:86px;top:854px" width="32" height="32"><use href="#i-printer"/></svg>
<div class="t" style="left:126.92px;top:850.11px;font-size:24.5px;font-weight:normal;color:#000;transform:scaleX(1.0204);">Print queues</div>
<svg class="ic" style="left:56px;top:898.5px" width="16" height="20"><path d="M3,2.5 L11,9.5 L3,16.5" fill="none" stroke="#858585" stroke-width="2.4"/></svg>
<svg class="ic" style="left:86px;top:890px" width="32" height="32"><use href="#i-cpu"/></svg>
<div class="t" style="left:126.92px;top:886.11px;font-size:24.5px;font-weight:normal;color:#000;transform:scaleX(1.0204);">Processors</div>
<svg class="ic" style="left:56px;top:934.5px" width="16" height="20"><path d="M3,2.5 L11,9.5 L3,16.5" fill="none" stroke="#858585" stroke-width="2.4"/></svg>
<svg class="ic" style="left:86px;top:926px" width="32" height="32"><use href="#i-swcomp"/></svg>
<div class="t" style="left:126.92px;top:922.11px;font-size:24.5px;font-weight:normal;color:#000;transform:scaleX(1.0204);">Software components</div>
<svg class="ic" style="left:56px;top:970.5px" width="16" height="20"><path d="M3,2.5 L11,9.5 L3,16.5" fill="none" stroke="#858585" stroke-width="2.4"/></svg>
<svg class="ic" style="left:86px;top:962px" width="32" height="32"><use href="#i-swdev"/></svg>
<div class="t" style="left:126.92px;top:958.11px;font-size:24.5px;font-weight:normal;color:#000;transform:scaleX(1.0204);">Software devices</div>
<svg class="ic" style="left:56px;top:1006.5px" width="16" height="20"><path d="M3,2.5 L11,9.5 L3,16.5" fill="none" stroke="#858585" stroke-width="2.4"/></svg>
<svg class="ic" style="left:86px;top:998px" width="32" height="32"><use href="#i-sound"/></svg>
<div class="t" style="left:127.01px;top:994.11px;font-size:24.5px;font-weight:normal;color:#000;transform:scaleX(0.9756);">Sound, video and game controllers</div>
<svg class="ic" style="left:56px;top:1042.5px" width="16" height="20"><path d="M3,2.5 L11,9.5 L3,16.5" fill="none" stroke="#858585" stroke-width="2.4"/></svg>
<svg class="ic" style="left:86px;top:1034px" width="32" height="32"><use href="#i-storage"/></svg>
<div class="t" style="left:127.03px;top:1030.11px;font-size:24.5px;font-weight:normal;color:#000;transform:scaleX(0.9673);">Storage controllers</div>
<svg class="ic" style="left:56px;top:1078.5px" width="16" height="20"><path d="M3,2.5 L11,9.5 L3,16.5" fill="none" stroke="#858585" stroke-width="2.4"/></svg>
<svg class="ic" style="left:86px;top:1070px" width="32" height="32"><use href="#i-system"/></svg>
<div class="t" style="left:127.09px;top:1066.11px;font-size:24.5px;font-weight:normal;color:#000;transform:scaleX(0.9353);">System devices</div>
</div></div>
<div class="abs" style="left:1521px;top:168px;width:33px;height:922px;background:#efefef"></div>
<div class="abs" style="left:1536px;top:378px;width:3px;height:628px;background:#848484;border-radius:1.5px"></div>
<div class="abs" style="left:1554px;top:150px;width:4px;height:985px;background:#fafafa"></div>
<div class="abs" style="left:0;top:1090px;width:1558px;height:4px;background:#f7f7f7"></div>
<div class="abs" style="left:0;top:1094px;width:1558px;height:1.5px;background:#d6d6d6"></div>
<div class="abs" style="left:0;top:1095.5px;width:1558px;height:44px;background:#f0f0f0"></div>
<div class="abs" style="left:1117px;top:1100px;width:1.5px;height:39px;background:#d0d0d0"></div>
<div class="abs" style="left:1382px;top:1100px;width:1.5px;height:39px;background:#d0d0d0"></div>
<div class="abs" style="left:1553px;top:1100px;width:1.5px;height:39px;background:#d0d0d0"></div>
<div class="t" style="left:3.63px;top:1099.11px;font-size:24.5px;font-weight:normal;color:#000;transform:scaleX(0.9668);">Uninstalls the driver for the selected device.</div>
</div>
<div class="menu"></div>
<div class="abs" style="left:393px;top:937px;width:455px;height:42px;background:#efefef;border-radius:6px"></div>
<div class="abs" style="left:398px;top:987.8px;width:443.5px;height:1.6px;background:#d6d6d6"></div>
<div class="abs" style="left:398px;top:1050px;width:443.5px;height:1.6px;background:#d6d6d6"></div>
<div class="t" style="left:455.51px;top:850.11px;font-size:24.5px;font-weight:normal;color:#000;transform:scaleX(0.9727);">Update driver</div>
<div class="t" style="left:455.54px;top:894.11px;font-size:24.5px;font-weight:normal;color:#000;transform:scaleX(0.9604);">Disable device</div>
<div class="t" style="left:456.59px;top:938.11px;font-size:24.5px;font-weight:normal;color:#000;transform:scaleX(0.9826);">Uninstall device</div>
<div class="t" style="left:455.56px;top:1000.11px;font-size:24.5px;font-weight:normal;color:#000;transform:scaleX(0.9511);">Scan for hardware changes</div>
<div class="t" style="left:455.51px;top:1062.11px;font-size:24.5px;font-weight:bold;color:#000;transform:scaleX(0.9754);">Properties</div>
<svg class="ic" style="left:741px;top:958px" width="30" height="44" viewBox="0 0 30 44">
<path d="M1.5,1.5 V33 L9,26 L14,38.5 L19,36.5 L14,24.5 H24.5 Z" fill="#fff" stroke="#000" stroke-width="1.8" stroke-linejoin="round"/>
</svg>
</body></html>
